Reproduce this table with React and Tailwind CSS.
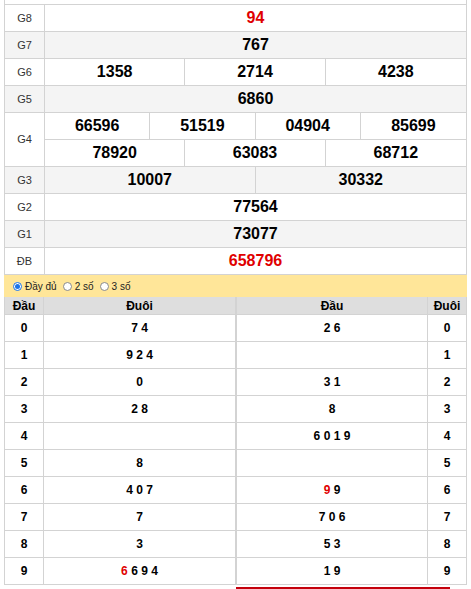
const LINE = 'border-[#d3d3d3]'

const results = [
  { label: 'G8', nums: ['94'], red: true, bg: 'bg-white' },
  { label: 'G7', nums: ['767'], bg: 'bg-[#f4f4f4]' },
  { label: 'G6', nums: ['1358', '2714', '4238'], bg: 'bg-white' },
  { label: 'G5', nums: ['6860'], bg: 'bg-[#f4f4f4]' },
]

const results2 = [
  { label: 'G3', nums: ['10007', '30332'], bg: 'bg-[#f4f4f4]' },
  { label: 'G2', nums: ['77564'], bg: 'bg-white' },
  { label: 'G1', nums: ['73077'], bg: 'bg-[#f4f4f4]' },
  { label: 'ĐB', nums: ['658796'], red: true, bg: 'bg-white' },
]

const gridCols = { 1: 'grid-cols-1', 2: 'grid-cols-2', 3: 'grid-cols-3', 4: 'grid-cols-4' }

// '*' marks a red digit
const dau = [['7', '4'], ['9', '2', '4'], ['0'], ['2', '8'], [], ['8'], ['4', '0', '7'], ['7'], ['3'], ['6*', '6', '9', '4']]
const duoi = [['2', '6'], [], ['3', '1'], ['8'], ['6', '0', '1', '9'], [], ['9*', '9'], ['7', '0', '6'], ['5', '3'], ['1', '9']]

function NumGrid({ nums, red, className = '' }) {
  return (
    <div className={`flex-1 grid ${gridCols[nums.length]} divide-x divide-[#d3d3d3] ${className}`}>
      {nums.map(n => (
        <div
          key={n}
          className={`flex items-center justify-center text-[16px] font-bold ${red ? 'text-[#e00000]' : 'text-black'}`}
        >
          {n}
        </div>
      ))}
    </div>
  )
}

function ResultRow({ label, nums, red, bg }) {
  return (
    <div className={`flex h-[27px] border-x border-b ${LINE} ${bg}`}>
      <div className={`w-[40px] shrink-0 border-r ${LINE} flex items-center justify-center text-[11px] text-[#333]`}>
        {label}
      </div>
      <NumGrid nums={nums} red={red} />
    </div>
  )
}

function Digits({ list }) {
  return (
    <span className="text-[12px] font-bold">
      {list.map((d, i) => (
        <span key={i} className={d.endsWith('*') ? 'text-[#e00000]' : 'text-black'}>
          {i > 0 ? ' ' : ''}
          {d.replace('*', '')}
        </span>
      ))}
    </span>
  )
}

function Radio({ checked, label }) {
  return (
    <label className="flex items-center gap-[3px]">
      <span
        className={`w-[9px] h-[9px] rounded-full border flex items-center justify-center bg-white ${
          checked ? 'border-[#1a73e8]' : 'border-[#8a8a8a]'
        }`}
      >
        {checked && <span className="w-[5px] h-[5px] rounded-full bg-[#1a73e8]" />}
      </span>
      <span className="text-[10px] text-[#222]">{label}</span>
    </label>
  )
}

export default function App() {
  return (
    <div className="bg-white w-[471px] h-[589px] overflow-hidden font-['Liberation_Sans',Arial,sans-serif] text-black">
      <div className="ml-[4px] w-[463px]">
        <div className={`h-[5px] border-x border-b ${LINE}`} />

        {results.map(r => (
          <ResultRow key={r.label} {...r} />
        ))}

        <div className={`flex h-[54px] border-x border-b ${LINE} bg-white`}>
          <div className={`w-[40px] shrink-0 border-r ${LINE} flex items-center justify-center text-[11px] text-[#333]`}>
            G4
          </div>
          <div className="flex-1 flex flex-col">
            <div className={`h-[27px] flex border-b ${LINE}`}>
              <NumGrid nums={['66596', '51519', '04904', '85699']} />
            </div>
            <div className="h-[26px] flex">
              <NumGrid nums={['78920', '63083', '68712']} />
            </div>
          </div>
        </div>

        {results2.map(r => (
          <ResultRow key={r.label} {...r} />
        ))}

        <div className="h-[22px] bg-[#ffe699] flex items-center gap-[6px] pl-[9px]">
          <Radio checked label="Đầy đủ" />
          <Radio label="2 số" />
          <Radio label="3 số" />
        </div>

        <div className="flex">
          {/* Đầu -> Đuôi */}
          <div className={`w-[232px] border-x ${LINE}`}>
            <div className={`flex h-[18px] bg-[#dedede] border-b ${LINE} text-[12px] font-bold`}>
              <div className={`w-[39px] border-r ${LINE} flex items-center justify-center`}>Đầu</div>
              <div className="flex-1 flex items-center justify-center">Đuôi</div>
            </div>
            {dau.map((list, i) => (
              <div key={i} className={`flex h-[27px] border-b ${LINE}`}>
                <div className={`w-[39px] border-r ${LINE} flex items-center justify-center text-[12px] font-bold`}>{i}</div>
                <div className="flex-1 flex items-center justify-center">
                  <Digits list={list} />
                </div>
              </div>
            ))}
          </div>

          {/* Đuôi -> Đầu */}
          <div className={`w-[231px] border-x ${LINE}`}>
            <div className={`flex h-[18px] bg-[#dedede] border-b ${LINE} text-[12px] font-bold`}>
              <div className={`flex-1 border-r ${LINE} flex items-center justify-center`}>Đầu</div>
              <div className="w-[38px] flex items-center justify-center">Đuôi</div>
            </div>
            {duoi.map((list, i) => (
              <div key={i} className={`flex h-[27px] border-b ${LINE}`}>
                <div className={`flex-1 border-r ${LINE} flex items-center justify-center`}>
                  <Digits list={list} />
                </div>
                <div className="w-[38px] flex items-center justify-center text-[12px] font-bold">{i}</div>
              </div>
            ))}
          </div>
        </div>

        <div className="mt-[2px] ml-[232px] w-[214px] h-[2px] bg-[#c4000c]" />
      </div>
    </div>
  )
}
